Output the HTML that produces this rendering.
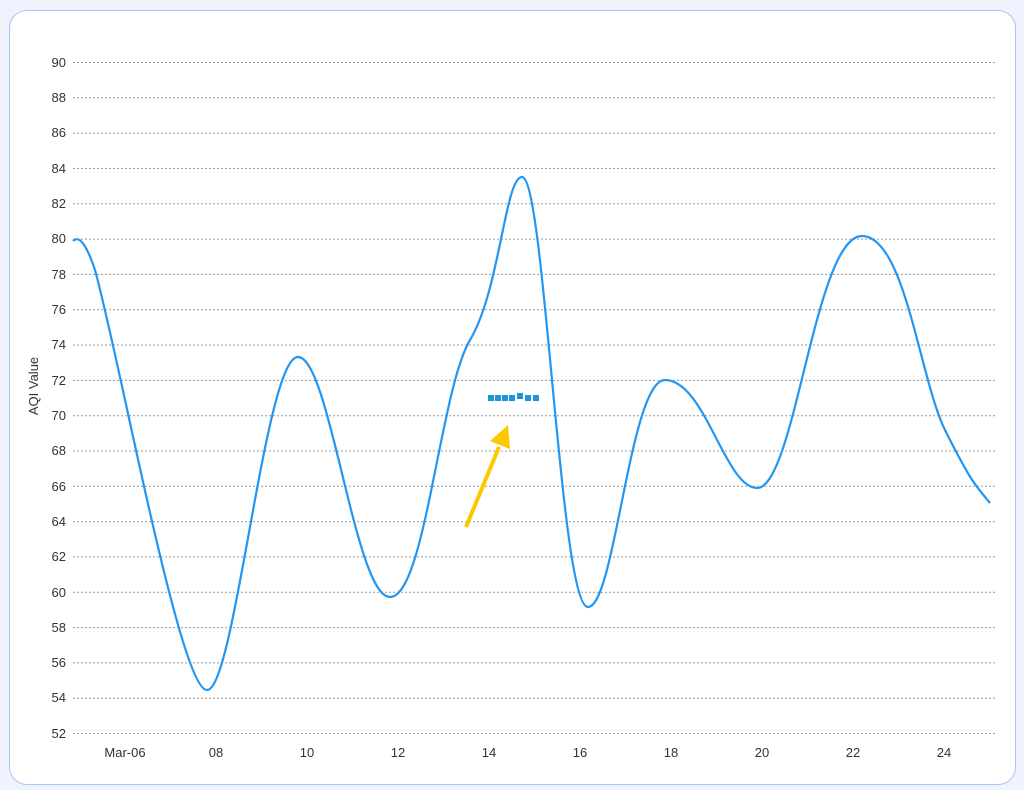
<!DOCTYPE html>
<html><head><style>
html,body{margin:0;padding:0;width:1024px;height:790px;background:#eef3fd;overflow:hidden}
.card{position:absolute;left:9px;top:10px;width:1005px;height:773px;border:1.5px solid #a9c5f7;border-radius:18px;background:#fff}
svg{position:absolute;left:0;top:0}
text{font-family:"Liberation Sans",sans-serif;font-size:13px;fill:#333}
</style></head><body>
<div class="card"></div>
<svg width="1024" height="790" viewBox="0 0 1024 790">
<g stroke="#999" stroke-width="1" stroke-dasharray="2,2">
<line x1="73" x2="996" y1="62.5" y2="62.5"/><line x1="73" x2="996" y1="97.8" y2="97.8"/><line x1="73" x2="996" y1="133.1" y2="133.1"/><line x1="73" x2="996" y1="168.5" y2="168.5"/><line x1="73" x2="996" y1="203.8" y2="203.8"/><line x1="73" x2="996" y1="239.1" y2="239.1"/><line x1="73" x2="996" y1="274.4" y2="274.4"/><line x1="73" x2="996" y1="309.7" y2="309.7"/><line x1="73" x2="996" y1="345" y2="345"/><line x1="73" x2="996" y1="380.4" y2="380.4"/><line x1="73" x2="996" y1="415.7" y2="415.7"/><line x1="73" x2="996" y1="451" y2="451"/><line x1="73" x2="996" y1="486.3" y2="486.3"/><line x1="73" x2="996" y1="521.6" y2="521.6"/><line x1="73" x2="996" y1="556.9" y2="556.9"/><line x1="73" x2="996" y1="592.3" y2="592.3"/><line x1="73" x2="996" y1="627.6" y2="627.6"/><line x1="73" x2="996" y1="662.9" y2="662.9"/><line x1="73" x2="996" y1="698.2" y2="698.2"/><line x1="73" x2="996" y1="733.5" y2="733.5"/>
</g>
<g text-anchor="end">
<text x="66" y="67">90</text><text x="66" y="102">88</text><text x="66" y="137">86</text><text x="66" y="173">84</text><text x="66" y="208">82</text><text x="66" y="243">80</text><text x="66" y="279">78</text><text x="66" y="314">76</text><text x="66" y="349">74</text><text x="66" y="385">72</text><text x="66" y="420">70</text><text x="66" y="455">68</text><text x="66" y="491">66</text><text x="66" y="526">64</text><text x="66" y="561">62</text><text x="66" y="597">60</text><text x="66" y="632">58</text><text x="66" y="667">56</text><text x="66" y="702">54</text><text x="66" y="738">52</text>
</g>
<g text-anchor="middle">
<text x="125" y="757">Mar-06</text><text x="216" y="757">08</text><text x="307" y="757">10</text><text x="398" y="757">12</text><text x="489" y="757">14</text><text x="580" y="757">16</text><text x="671" y="757">18</text><text x="762" y="757">20</text><text x="853" y="757">22</text><text x="944" y="757">24</text>
</g>
<text transform="translate(38,386) rotate(-90)" text-anchor="middle">AQI Value</text>
<path fill="none" stroke="#2196f3" stroke-width="2.2" d="M73,241 C78,236 85,240 95,270 C120,360 180,690 207,690 C235,690 265,357 298,357 C330,357 355,597 390,597 C425,597 440,390 470,340 S505,177 522,177 C545,177 560,607 588,607 C615,607 630,380 665,380 C705,380 725,488 757,488 C795,488 815,236 862,236 C905,236 920,380 945,430 S975,485 990,503"/>
<g fill="#1e96d4">
<rect x="488" y="395" width="6" height="6"/><rect x="495" y="395" width="6" height="6"/><rect x="502" y="395" width="6" height="6"/><rect x="509" y="395" width="6" height="6"/><rect x="517" y="393" width="6" height="6"/><rect x="525" y="395" width="6" height="6"/><rect x="533" y="395" width="6" height="6"/>
</g>
<line x1="466" y1="527" x2="499" y2="447" stroke="#fcc800" stroke-width="4"/>
<polygon points="508,425 490,441 510,449" fill="#fcc800"/>
</svg>
</body></html>
